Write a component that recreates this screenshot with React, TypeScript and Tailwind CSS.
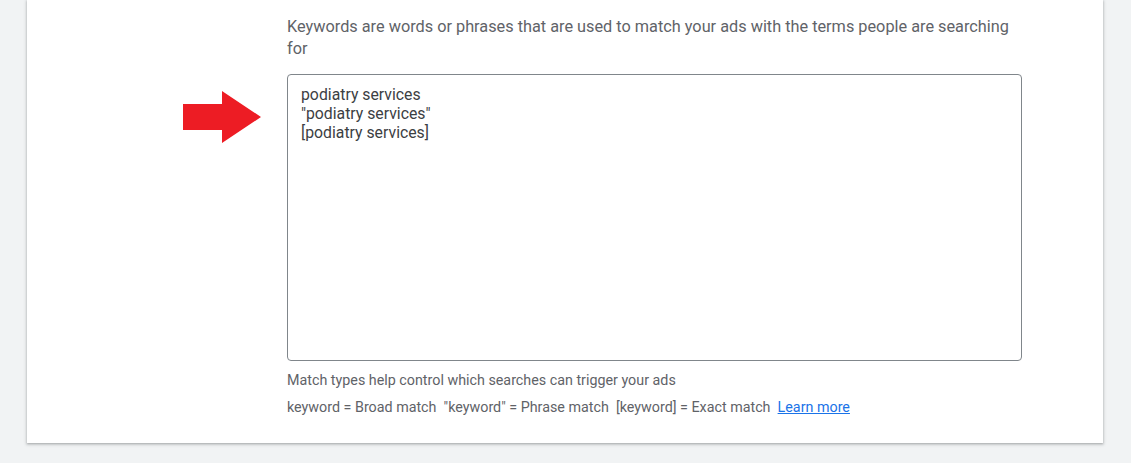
const App = () => {
  return (
    <div className="min-h-[463px] bg-[#f1f3f4] font-['Roboto',sans-serif]">
      <div className="ml-[27px] w-[1076px] bg-white pb-[26px] pt-[16px] shadow-[0_1px_2px_rgba(60,64,67,0.3),0_1px_3px_1px_rgba(60,64,67,0.15)]">
        <div className="grid grid-cols-[260px_735px]">
          <div />
          <p className="text-[16.3px] leading-[22px] text-[#5f6368]">
            Keywords are words or phrases that are used to match your ads with the terms people are searching for
          </p>

          {/* Arrow annotation */}
          <div className="flex justify-end pr-[26px] pt-[31px]">
            <svg width="78" height="52" viewBox="0 0 78 52" className="block">
              <path d="M0 13H39V0L78 26L39 52V39H0Z" fill="#ed1c24" />
            </svg>
          </div>
          <div className="mt-[14px]">
            <div className="h-[287px] w-[735px] rounded-[4px] border border-[#80868b] px-[13px] pt-[10px] text-[15.8px] leading-[19px] text-[#3c4043]">
              <div>podiatry services</div>
              <div>"podiatry services"</div>
              <div>[podiatry services]</div>
            </div>
          </div>

          <div />
          <div className="mt-[9px] text-[14.3px] leading-[20px] text-[#5f6368]">
            <p>Match types help control which searches can trigger your ads</p>
            <p className="mt-[7px] whitespace-pre">
              {'keyword = Broad match  "keyword" = Phrase match  [keyword] = Exact match  '}
              <a href="#" className="text-[#1a73e8] underline">Learn more</a>
            </p>
          </div>
        </div>
      </div>
    </div>
  );
};

export default App;
